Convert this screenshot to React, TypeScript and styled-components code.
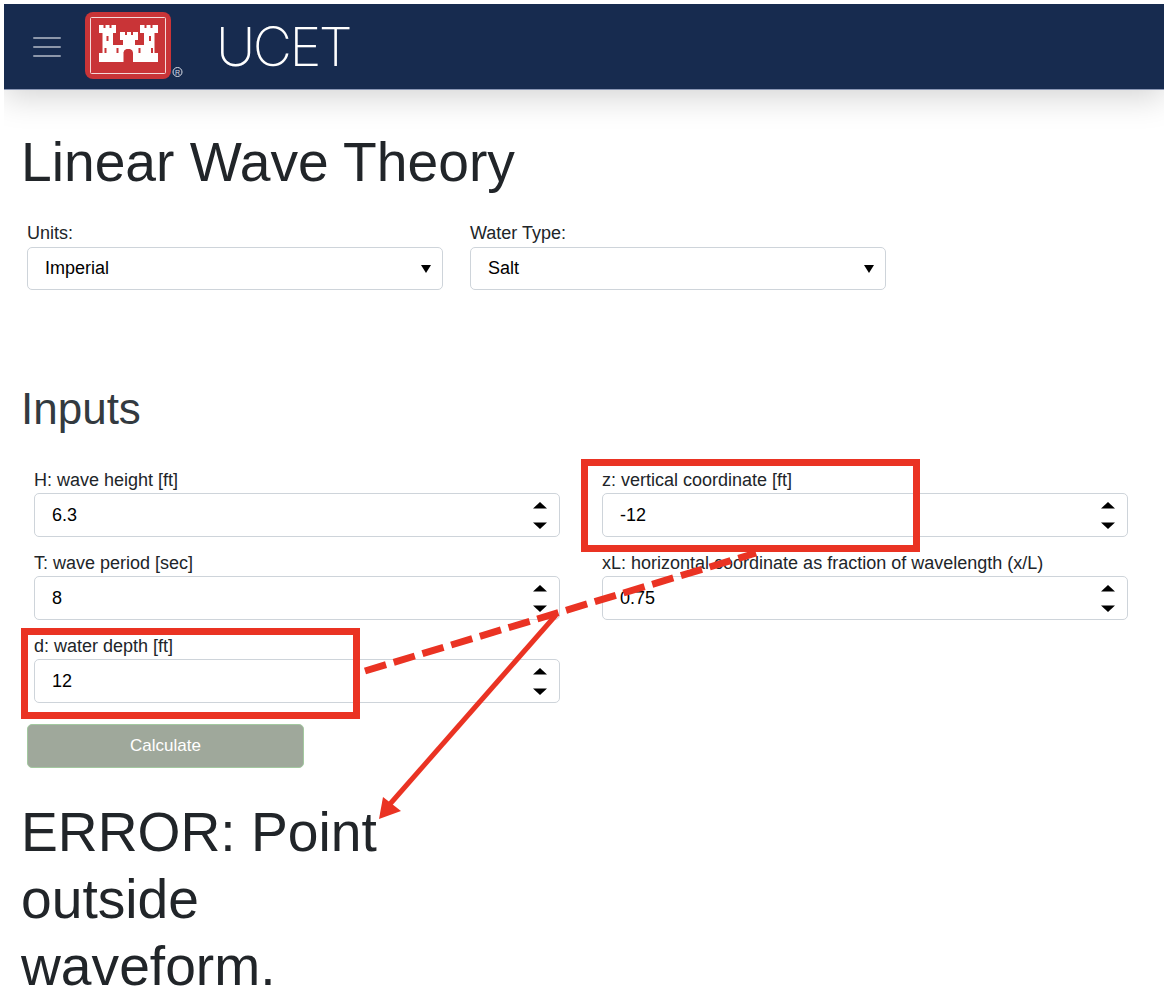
import React from "react";
import styled, { createGlobalStyle } from "styled-components";

const RED = "#ea3323";

const GlobalStyle = createGlobalStyle`
  html, body { margin: 0; padding: 0; background: #fff; }
  body { font-family: "Liberation Sans", Arial, sans-serif; color: #212529; }
  * { box-sizing: border-box; }
`;

const Screen = styled.div`
  position: relative;
  width: 1168px;
  height: 1002px;
  overflow: hidden;
  background: #fff;
`;

const Page = styled.div`
  margin: 4px 4px 0;
  height: 998px;
  overflow: hidden;
`;

const Header = styled.header`
  display: flex;
  align-items: center;
  height: 86px;
  padding-left: 29px;
  background: #172b4f;
  border-bottom: 1px solid #8b97b5;
  box-shadow: 0 8px 32px rgba(0, 0, 0, 0.17);
`;

const MenuButton = styled.div`
  display: flex;
  flex-direction: column;
  gap: 7px;
  width: 28px;
  margin-right: 24px;
`;

const MenuLine = styled.span`
  display: block;
  height: 2px;
  border-radius: 1px;
  background: #8d97aa;
`;

const LogoMark = styled.svg`
  margin-bottom: 2px;
`;

const AppName = styled.div`
  margin-left: 33px;
  font-family: "Inter", sans-serif;
  font-weight: 150;
  font-size: 54px;
  line-height: 1;
  letter-spacing: -2.5px;
  color: #fff;
`;

const Main = styled.main`
  padding: 39px 17px 0;
`;

const Title = styled.h1`
  margin: 0;
  font-size: 55.2px;
  font-weight: 400;
  line-height: 67px;
`;

const SelectRow = styled.div`
  display: flex;
  gap: 27px;
  margin: 28px 0 0 6px;
`;

const SelectField = styled.label`
  display: block;
  width: 416px;
  font-size: 18px;
  line-height: 19px;
`;

const SelectBox = styled.div`
  position: relative;
  display: flex;
  align-items: center;
  height: 43px;
  margin-top: 4px;
  padding-left: 17px;
  border: 1px solid #ced4da;
  border-radius: 5px;
  font-size: 18px;
  color: #000;
`;

const SelectArrow = styled.svg`
  position: absolute;
  right: 11px;
  top: 17px;
`;

const SectionTitle = styled.h2`
  margin: 94px 0 0;
  font-size: 44px;
  font-weight: 400;
  line-height: 50px;
  color: #333a40;
`;

const InputGrid = styled.div`
  display: grid;
  grid-template-columns: 526px 526px;
  column-gap: 42px;
  grid-auto-rows: 83px;
  margin: 37px 0 0 13px;
`;

const Field = styled.label`
  display: block;
  font-size: 18px;
  line-height: 19px;
`;

const NumberBox = styled.div`
  position: relative;
  height: 44px;
  margin-top: 3px;
`;

const NumberInput = styled.input`
  width: 100%;
  height: 100%;
  padding: 0 40px 0 17px;
  border: 1px solid #ced4da;
  border-radius: 5px;
  outline: none;
  background: #fff;
  font-family: inherit;
  font-size: 18px;
  color: #000;
`;

const Spinner = styled.svg`
  position: absolute;
  right: 13px;
  top: 9px;
`;

const CalcButton = styled.button`
  display: block;
  width: 277px;
  height: 44px;
  margin: 4px 0 0 6px;
  border: 1px solid #a3c9a0;
  border-radius: 5px;
  background: #9fa89b;
  font-family: inherit;
  font-size: 17px;
  color: #fff;
`;

const ErrorText = styled.div`
  width: 380px;
  margin-top: 31px;
  font-size: 55.2px;
  line-height: 67px;
`;

const Annotations = styled.svg`
  position: absolute;
  left: 0;
  top: 0;
  pointer-events: none;
`;

const Logo = () => (
  <LogoMark width="98" height="68" viewBox="0 0 98 68">
    <rect x="0" y="0" width="86" height="67" rx="8" fill="#c93437" />
    <rect x="5.5" y="5.5" width="75" height="56" fill="none" stroke="#f4d9d9" strokeWidth="1" rx="1" />
    <g fill="#fff">
      <path d="M14 13h4.5v3h2v-3h4v3h2v-3H31v8h-3v20H17.5V21H14z" />
      <path d="M55 13h4.5v3h2v-3h4v3h2v-3H73v8h-3.5v20H59V21h-4z" />
      <path d="M35 20h5v3h2v-3h4v3h2v-3h5v8h-3v6H38v-6h-3z" />
      <rect x="28" y="33" width="31" height="9" />
      <rect x="14" y="41" width="59" height="9" />
    </g>
    <path d="M38.500 50v-9.500a4 4 0 0 1 3-3.500h3.500a4 4 0 0 1 3 3.500V50z" fill="#c93437" />
    <g fill="#c93437">
      <rect x="21.500" y="24" width="2" height="5" />
      <rect x="64" y="24" width="2" height="5" />
      <rect x="19.500" y="36" width="2" height="5" />
      <rect x="31.500" y="36" width="2" height="5" />
      <rect x="53.500" y="36" width="2" height="5" />
      <rect x="66" y="36" width="2" height="5" />
    </g>
    <circle cx="92.500" cy="60" r="4.500" fill="none" stroke="#d8dde6" strokeWidth="1" />
    <text x="92.500" y="62.500" textAnchor="middle" fontSize="7" fontFamily="Liberation Sans" fill="#d8dde6">R</text>
  </LogoMark>
);

const SpinnerIcon = () => (
  <Spinner width="14" height="27" viewBox="0 0 14 27">
    <path d="M0 6.500L7 0l7 6.500z" fill="#000" />
    <path d="M0 20.500h14L7 27z" fill="#000" />
  </Spinner>
);

const units = [
  { label: "Units:", value: "Imperial" },
  { label: "Water Type:", value: "Salt" },
];

const inputs = [
  { label: "H: wave height [ft]", value: "6.3" },
  { label: "z: vertical coordinate [ft]", value: "-12" },
  { label: "T: wave period [sec]", value: "8" },
  { label: "xL: horizontal coordinate as fraction of wavelength (x/L)", value: "0.75" },
  { label: "d: water depth [ft]", value: "12" },
];

export default function App() {
  return (
    <Screen>
      <GlobalStyle />
      <Page>
        <Header>
          <MenuButton>
            <MenuLine />
            <MenuLine />
            <MenuLine />
          </MenuButton>
          <Logo />
          <AppName>UCET</AppName>
        </Header>
        <Main>
          <Title>Linear Wave Theory</Title>
          <SelectRow>
            {units.map((u) => (
              <SelectField key={u.label}>
                {u.label}
                <SelectBox>
                  {u.value}
                  <SelectArrow width="10" height="8" viewBox="0 0 10 8">
                    <path d="M0 0h10L5 8z" fill="#000" />
                  </SelectArrow>
                </SelectBox>
              </SelectField>
            ))}
          </SelectRow>
          <SectionTitle>Inputs</SectionTitle>
          <InputGrid>
            {inputs.map((f) => (
              <Field key={f.label}>
                {f.label}
                <NumberBox>
                  <NumberInput type="text" value={f.value} readOnly />
                  <SpinnerIcon />
                </NumberBox>
              </Field>
            ))}
          </InputGrid>
          <CalcButton>Calculate</CalcButton>
          <ErrorText>ERROR: Point outside waveform.</ErrorText>
        </Main>
      </Page>
      <Annotations width="1168" height="1002" viewBox="0 0 1168 1002">
        <rect x="584.500" y="462.500" width="332" height="86" fill="none" stroke={RED} strokeWidth="7" />
        <rect x="24.500" y="631.500" width="332" height="84" fill="none" stroke={RED} strokeWidth="7" />
        <path d="M365 671L756 553" stroke={RED} strokeWidth="7" strokeDasharray="22 8" fill="none" />
        <path d="M556 615L390 804" stroke={RED} strokeWidth="5" fill="none" />
        <path d="M379 819l4-22 18 14z" fill={RED} />
      </Annotations>
    </Screen>
  );
}
